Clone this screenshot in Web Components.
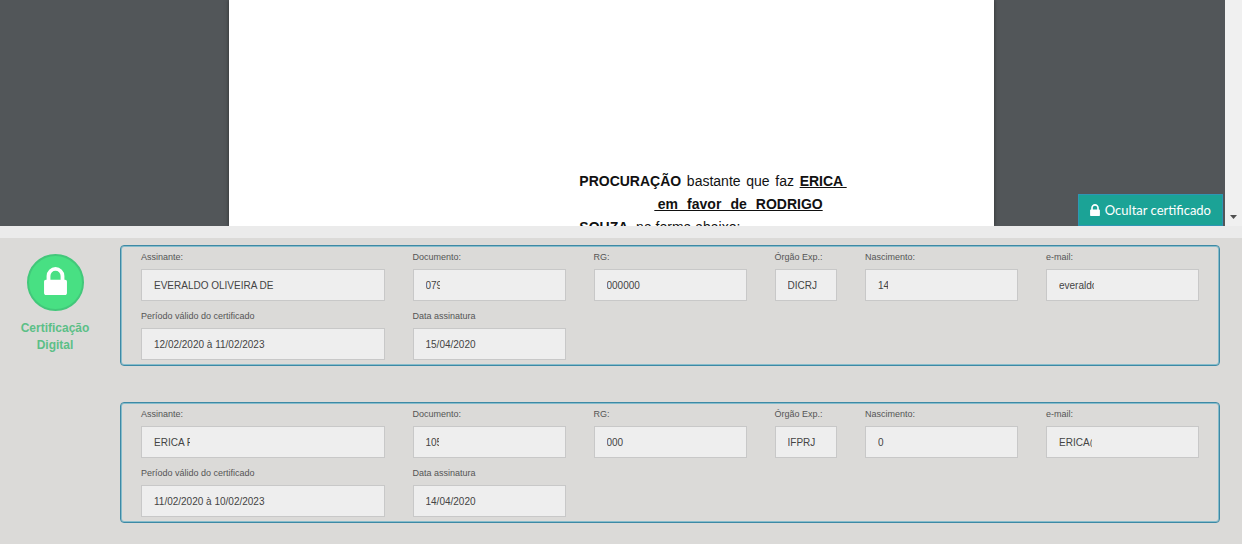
<!DOCTYPE html>
<html lang="pt-BR">
<head>
<meta charset="utf-8">
<title>Certificado</title>
<style>
  body {
    margin: 0;
    background: #dbdad8;
    font-family: "Liberation Sans", Arial, sans-serif;
  }
</style>
</head>
<body>
<document-viewer>
  <document-sheet slot="page">
    <p class="wide"><b>PROCURAÇÃO</b> bastante que faz <b><u>ERICA&#8197;</u></b></p>
    <p class="inner"><b><u>&#8197;em favor de RODRIGO</u></b></p>
    <p><b>SOUZA</b>, na forma abaixo:</p>
  </document-sheet>
  <toggle-button slot="action">Ocultar certificado</toggle-button>
</document-viewer>

<certificate-panel>
  <certificate-badge slot="badge">Certificação Digital</certificate-badge>
  <signer-card>
    <data-field span="3" label="Assinante:" value="EVERALDO OLIVEIRA DE"></data-field>
    <data-field span="2" label="Documento:" value="079" visible="14"></data-field>
    <data-field span="2" label="RG:" value="000000"></data-field>
    <data-field span="1" label="Órgão Exp.:" value="DICRJ"></data-field>
    <data-field span="2" label="Nascimento:" value="14" visible="10"></data-field>
    <data-field span="2" label="e-mail:" value="everaldo" visible="35"></data-field>
    <data-field span="3" label="Período válido do certificado" value="12/02/2020 à 11/02/2023"></data-field>
    <data-field span="2" label="Data assinatura" value="15/04/2020"></data-field>
  </signer-card>
  <signer-card>
    <data-field span="3" label="Assinante:" value="ERICA F" visible="36"></data-field>
    <data-field span="2" label="Documento:" value="105" visible="13"></data-field>
    <data-field span="2" label="RG:" value="000"></data-field>
    <data-field span="1" label="Órgão Exp.:" value="IFPRJ"></data-field>
    <data-field span="2" label="Nascimento:" value="0"></data-field>
    <data-field span="2" label="e-mail:" value="ERICA@" visible="33"></data-field>
    <data-field span="3" label="Período válido do certificado" value="11/02/2020 à 10/02/2023"></data-field>
    <data-field span="2" label="Data assinatura" value="14/04/2020"></data-field>
  </signer-card>
</certificate-panel>

<script>
const makeTemplate = (html) => {
  const template = document.createElement("template");
  template.innerHTML = html;
  return template;
};

const lockIcon = `
  <svg viewBox="0 0 1152 1408" fill="currentColor" aria-hidden="true">
    <path d="M320 640h512V448q0-106-75-181t-181-75-181 75-75 181v192zm832 96v576q0 40-28 68t-68 28H96q-40 0-68-28t-28-68V736q0-40 28-68t68-28h32V448q0-184 132-316T576 0t316 132 132 316v192h32q40 0 68 28t28 68z"/>
  </svg>
`;

const viewer_template = makeTemplate(`
  <style>
    :host {
      display: flex;
      position: relative;
      height: 226px;
      overflow: hidden;
      background: #525659;
      border-bottom: 12px solid #ebebeb;
    }
    .page {
      flex: 1;
      display: flex;
      justify-content: center;
      padding-right: 2px;
    }
    .scrollbar {
      width: 17px;
      display: flex;
      align-items: flex-end;
      justify-content: center;
      background: #f0f0f0;
    }
    .scrollbar svg {
      width: 7px;
      height: 4px;
      margin-bottom: 7px;
    }
    .action {
      position: absolute;
      right: 19px;
      bottom: 0;
    }
  </style>
  <div class="page"><slot name="page"></slot></div>
  <div class="scrollbar">
    <svg viewBox="0 0 7 4"><path d="M0 0h7L3.500 4z" fill="#505050"/></svg>
  </div>
  <div class="action"><slot name="action"></slot></div>
`);

const sheet_template = makeTemplate(`
  <style>
    :host {
      display: block;
      box-sizing: border-box;
      width: 62.5%;
      padding: 170px 147px 0 350px;
      background: #fff;
      box-shadow: 0 0 4px #2c2e30;
      color: #111;
      font-size: 14px;
      line-height: 23px;
    }
    ::slotted(p) {
      margin: 0;
      white-space: nowrap;
    }
    ::slotted(.wide) {
      text-align-last: justify;
      white-space: normal;
    }
    ::slotted(.inner) {
      margin: 0 24px 0 75px;
      text-align-last: justify;
      white-space: normal;
    }
  </style>
  <slot></slot>
`);

const button_template = makeTemplate(`
  <style>
    :host {
      display: block;
    }
    button {
      display: flex;
      align-items: center;
      gap: 5px;
      height: 32px;
      padding: 0 11px;
      border: 1px solid #2f95b4;
      background: #1ba396;
      color: #fff;
      font-family: Lato, sans-serif;
      font-size: 13px;
      white-space: nowrap;
      cursor: pointer;
    }
    svg {
      width: 10px;
      height: 12px;
    }
  </style>
  <button type="button">${lockIcon}<slot></slot></button>
`);

const panel_template = makeTemplate(`
  <style>
    :host {
      display: flex;
      gap: 10px;
      padding: 7px 22px 20px 0;
      background: #dbdad8;
    }
    .badge {
      width: 110px;
      flex: none;
    }
    .cards {
      flex: 1;
      display: flex;
      flex-direction: column;
      gap: 36px;
    }
  </style>
  <div class="badge"><slot name="badge"></slot></div>
  <div class="cards"><slot></slot></div>
`);

const badge_template = makeTemplate(`
  <style>
    :host {
      display: flex;
      flex-direction: column;
      align-items: center;
      gap: 9px;
      padding: 9px 16px 0;
      color: #5cbf87;
      font-size: 12px;
      font-weight: bold;
      line-height: 17px;
      text-align: center;
    }
    .circle {
      display: flex;
      align-items: center;
      justify-content: center;
      box-sizing: border-box;
      width: 57px;
      height: 57px;
      padding-bottom: 3px;
      border: 2px solid #42c87a;
      border-radius: 50%;
      background: #48e083;
      color: #fff;
    }
    svg {
      width: 23px;
      height: 28px;
    }
  </style>
  <div class="circle">${lockIcon}</div>
  <span><slot></slot></span>
`);

const card_template = makeTemplate(`
  <style>
    :host {
      display: grid;
      grid-template-columns: repeat(12, minmax(0, 1fr));
      gap: 7px 28px;
      padding: 3px 20px 5px;
      border: 1px solid #3d89a5;
      border-radius: 4px;
      box-shadow: inset 0 0 0 1px #86bccb;
    }
  </style>
  <slot></slot>
`);

const field_template = makeTemplate(`
  <style>
    :host {
      display: flex;
      flex-direction: column;
      gap: 4px;
    }
    label {
      color: #555;
      font-size: 9px;
      line-height: 16px;
      white-space: nowrap;
    }
    input {
      box-sizing: border-box;
      width: 100%;
      height: 32px;
      padding: 0 12px;
      border: 1px solid #c8c8c8;
      border-radius: 0;
      background: #eee;
      color: #444;
      font-family: inherit;
      font-size: 10px;
    }
  </style>
  <label for="field"></label>
  <input id="field" type="text" readonly>
`);

class DocumentViewer extends HTMLElement {
  constructor() {
    super();
    this.attachShadow({ mode: "open" }).append(viewer_template.content.cloneNode(true));
  }
}

class DocumentSheet extends HTMLElement {
  constructor() {
    super();
    this.attachShadow({ mode: "open" }).append(sheet_template.content.cloneNode(true));
  }
}

class ToggleButton extends HTMLElement {
  constructor() {
    super();
    this.attachShadow({ mode: "open" }).append(button_template.content.cloneNode(true));
  }
}

class CertificatePanel extends HTMLElement {
  constructor() {
    super();
    this.attachShadow({ mode: "open" }).append(panel_template.content.cloneNode(true));
  }
}

class CertificateBadge extends HTMLElement {
  constructor() {
    super();
    this.attachShadow({ mode: "open" }).append(badge_template.content.cloneNode(true));
  }
}

class SignerCard extends HTMLElement {
  constructor() {
    super();
    this.attachShadow({ mode: "open" }).append(card_template.content.cloneNode(true));
  }
}

class DataField extends HTMLElement {
  constructor() {
    super();
    this.attachShadow({ mode: "open" }).append(field_template.content.cloneNode(true));
  }

  connectedCallback() {
    const input = this.shadowRoot.querySelector("input");
    this.shadowRoot.querySelector("label").textContent = this.getAttribute("label");
    input.value = this.getAttribute("value");
    this.style.gridColumn = `span ${this.getAttribute("span")}`;

    // hide personal data after the first few pixels
    const visible = this.getAttribute("visible");
    if (visible) {
      input.style.paddingRight = `calc(100% - ${visible}px - 14px)`;
    }
  }
}

customElements.define("document-viewer", DocumentViewer);
customElements.define("document-sheet", DocumentSheet);
customElements.define("toggle-button", ToggleButton);
customElements.define("certificate-panel", CertificatePanel);
customElements.define("certificate-badge", CertificateBadge);
customElements.define("signer-card", SignerCard);
customElements.define("data-field", DataField);
</script>
</body>
</html>
